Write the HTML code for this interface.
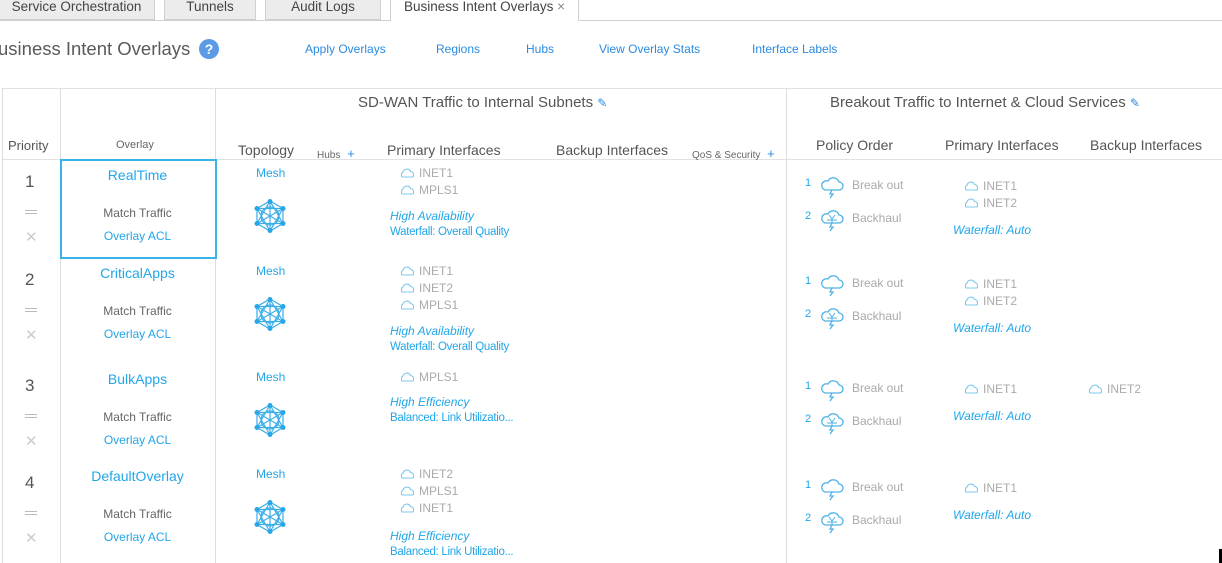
<!DOCTYPE html>
<html><head><meta charset="utf-8"><style>
*{margin:0;padding:0;box-sizing:border-box}
body{width:1222px;height:563px;overflow:hidden;background:#fff;font-family:"Liberation Sans","DejaVu Sans",sans-serif;position:relative;color:#444}
.a{position:absolute;white-space:nowrap}
.tab{position:absolute;top:-2px;height:22px;background:#ececec;border:1px solid #cfcfcf;border-top:none;font-size:13.5px;color:#444;text-align:center;line-height:18px}
.l{color:#2a8be0;font-size:12px}
.b{color:#22a6e8}
.g{color:#aaa;font-size:12px}
.h{font-size:14px;color:#555}
.s{font-size:10px;color:#666}
.vl{position:absolute;width:1px;background:#ddd}
.hl{position:absolute;height:1px;background:#e2e2e2}
.i{font-style:italic;color:#22a6e8;font-size:12px}
.w{color:#22a6e8;font-size:11.5px;letter-spacing:-.3px}
.c{display:inline-block;vertical-align:-1px;margin-right:5px}
</style></head><body>
<svg width="0" height="0" style="position:absolute">
<defs>
<symbol id="cl" viewBox="0 0 14 10"><path d="M2 9h10.5a1 1 0 0 0 1-1V6.5A3 3 0 0 0 10.5 3.5 4 4 0 0 0 3 4a3 3 0 0 0-1.5 2.5V8a1 1 0 0 0 .5 1z" fill="none" stroke="#7cc9ef" stroke-width="1.1"/></symbol>
<symbol id="bo" viewBox="0 0 24 24"><path d="M5 15h14a4 4 0 0 0 0-8 6 6 0 0 0-11-1 4.5 4.5 0 0 0-3 9z" fill="none" stroke="#4fb1e6" stroke-width="1.3"/><path d="M12 15l-2 4 3 0-3 4" fill="none" stroke="#4fb1e6" stroke-width="1.3"/></symbol>
<symbol id="bh" viewBox="0 0 24 24"><path d="M5 15h14a4 4 0 0 0 0-8 6 6 0 0 0-11-1 4.5 4.5 0 0 0-3 9z" fill="none" stroke="#4fb1e6" stroke-width="1.3"/><path d="M9 7l3 4 3-4M12 11v4M7 12h10" fill="none" stroke="#4fb1e6" stroke-width="1"/><path d="M12 15l-2 4 3 0-3 4" fill="none" stroke="#4fb1e6" stroke-width="1.3"/></symbol>
<symbol id="mesh" viewBox="0 0 34 34"><g stroke="#3aaee8" stroke-width="1.2" fill="none"><polygon points="17,2 30,9.5 30,24.5 17,32 4,24.5 4,9.5"/><circle cx="17" cy="17" r="9"/><path d="M17 2L17 32M4 9.5L30 24.5M30 9.5L4 24.5M17 2L4 24.5M17 2L30 24.5M4 9.5L30 9.5M4 24.5L30 24.5M4 9.5L17 32M30 9.5L17 32"/></g><g fill="#2aa6e6"><circle cx="17" cy="2.5" r="2.5"/><circle cx="30" cy="9.5" r="2.5"/><circle cx="30" cy="24.5" r="2.5"/><circle cx="17" cy="31.5" r="2.5"/><circle cx="4" cy="24.5" r="2.5"/><circle cx="4" cy="9.5" r="2.5"/></g></symbol>
</defs></svg>

<div class="tab" style="left:-2px;width:157px">Service Orchestration</div>
<div class="tab" style="left:164px;width:92px">Tunnels</div>
<div class="tab" style="left:265px;width:116px">Audit Logs</div>
<div class="tab" style="left:390px;width:189px;background:#fff;border-bottom:none;height:23px">Business Intent Overlays <span style="color:#888">×</span></div>
<div class="hl" style="left:0;top:20px;width:390px;background:#cfcfcf"></div>
<div class="hl" style="left:579px;top:20px;width:643px;background:#cfcfcf"></div>

<div class="a" style="left:-2px;top:38px;font-size:18.5px;color:#5a5a5a">usiness Intent Overlays</div>
<div class="a" style="left:199px;top:39px;width:20px;height:20px;border-radius:50%;background:#5b9be6;color:#fff;font-weight:bold;font-size:14px;text-align:center;line-height:20px">?</div>
<div class="a l" style="left:305px;top:42px">Apply Overlays</div>
<div class="a l" style="left:436px;top:42px">Regions</div>
<div class="a l" style="left:526px;top:42px">Hubs</div>
<div class="a l" style="left:599px;top:42px">View Overlay Stats</div>
<div class="a l" style="left:752px;top:42px">Interface Labels</div>

<div class="hl" style="left:2px;top:88px;width:1220px"></div>
<div class="hl" style="left:2px;top:159px;width:1220px"></div>
<div class="vl" style="left:2px;top:88px;height:475px"></div>
<div class="vl" style="left:60px;top:88px;height:475px"></div>
<div class="vl" style="left:215px;top:88px;height:475px"></div>
<div class="vl" style="left:786px;top:88px;height:475px"></div>
<div class="a" style="left:60px;top:159px;width:157px;height:100px;border:2px solid #3ab3e8"></div>

<div class="a h" style="left:358px;top:94px;font-size:15px">SD-WAN Traffic to Internal Subnets <span style="color:#2a8be0;font-size:12px">✎</span></div>
<div class="a h" style="left:830px;top:94px;font-size:15px">Breakout Traffic to Internet &amp; Cloud Services <span style="color:#2a8be0;font-size:12px">✎</span></div>
<div class="a" style="left:8px;top:138px;font-size:13px;color:#555">Priority</div>
<div class="a s" style="left:116px;top:139px;font-size:11px">Overlay</div>
<div class="a h" style="left:238px;top:142px">Topology</div>
<div class="a s" style="left:317px;top:146px">Hubs <span style="color:#2a8be0;font-size:13px;margin-left:4px">+</span></div>
<div class="a h" style="left:387px;top:142px">Primary Interfaces</div>
<div class="a h" style="left:556px;top:142px">Backup Interfaces</div>
<div class="a s" style="left:692px;top:146px">QoS &amp; Security <span style="color:#2a8be0;font-size:13px;margin-left:4px">+</span></div>
<div class="a h" style="left:816px;top:137px">Policy Order</div>
<div class="a h" style="left:945px;top:137px">Primary Interfaces</div>
<div class="a h" style="left:1090px;top:137px">Backup Interfaces</div>

<div id="rows"></div>
<script>
const R=[
 {y:166,n:'1',name:'RealTime',p:['INET1','MPLS1'],pol:['High Availability','Waterfall: Overall Quality'],poly:208,bo:177,bi:['INET1','INET2'],bb:[]},
 {y:264,n:'2',name:'CriticalApps',p:['INET1','INET2','MPLS1'],pol:['High Availability','Waterfall: Overall Quality'],poly:323,bo:275,bi:['INET1','INET2'],bb:[]},
 {y:370,n:'3',name:'BulkApps',p:['MPLS1'],pol:['High Efficiency','Balanced: Link Utilizatio...'],poly:394,bo:380,bi:['INET1'],bb:['INET2']},
 {y:467,n:'4',name:'DefaultOverlay',p:['INET2','MPLS1','INET1'],pol:['High Efficiency','Balanced: Link Utilizatio...'],poly:528,bo:479,bi:['INET1'],bb:[]}];
const cl='<svg class="c" width="14" height="10"><use href="#cl"/></svg>';
let h='';
R.forEach(r=>{const y=r.y;
 h+=`<div class="a" style="left:25px;top:${y+6}px;font-size:17px;color:#555">${r.n}</div>
 <div class="a" style="left:25px;top:${y+44}px;width:12px;border-top:1.5px solid #bbb;height:4px;border-bottom:1.5px solid #bbb"></div>
 <div class="a" style="left:25px;top:${y+62}px;color:#ccc;font-size:15px">✕</div>
 <div class="a b" style="left:60px;width:155px;text-align:center;top:${y+1}px;font-size:14px">${r.name}</div>
 <div class="a" style="left:60px;width:155px;text-align:center;top:${y+40}px;font-size:12px;color:#666">Match Traffic</div>
 <div class="a b" style="left:60px;width:155px;text-align:center;top:${y+63}px;font-size:12px">Overlay ACL</div>
 <div class="a b" style="left:256px;top:${y}px;font-size:12px">Mesh</div>
 <svg class="a" style="left:253px;top:${y+33}px" width="34" height="34"><use href="#mesh"/></svg>`;
 r.p.forEach((p,k)=>{h+=`<div class="a g" style="left:400px;top:${y+k*17}px">${cl}${p}</div>`});
 h+=`<div class="a i" style="left:390px;top:${r.poly+1}px">${r.pol[0]}</div><div class="a w" style="left:390px;top:${r.poly+18}px">${r.pol[1]}</div>`;
 const b=r.bo;
 h+=`<div class="a b" style="left:805px;top:${b}px;font-size:11px">1</div><svg class="a" style="left:820px;top:${b-2}px" width="24" height="24"><use href="#bo"/></svg><div class="a g" style="left:852px;top:${b+1}px">Break out</div>
 <div class="a b" style="left:805px;top:${b+33}px;font-size:11px">2</div><svg class="a" style="left:820px;top:${b+31}px" width="24" height="24"><use href="#bh"/></svg><div class="a g" style="left:852px;top:${b+34}px">Backhaul</div>`;
 r.bi.forEach((p,k)=>{h+=`<div class="a g" style="left:964px;top:${b+2+k*17}px">${cl}${p}</div>`});
 r.bb.forEach((p,k)=>{h+=`<div class="a g" style="left:1088px;top:${b+2+k*17}px">${cl}${p}</div>`});
 h+=`<div class="a i" style="left:953px;top:${b+2+r.bi.length*17+10}px">Waterfall: Auto</div>`;
});
document.getElementById('rows').innerHTML=h;
</script>
<div class="a" style="left:1219px;top:549px;width:3px;height:14px;background:#000"></div>
</body></html>
